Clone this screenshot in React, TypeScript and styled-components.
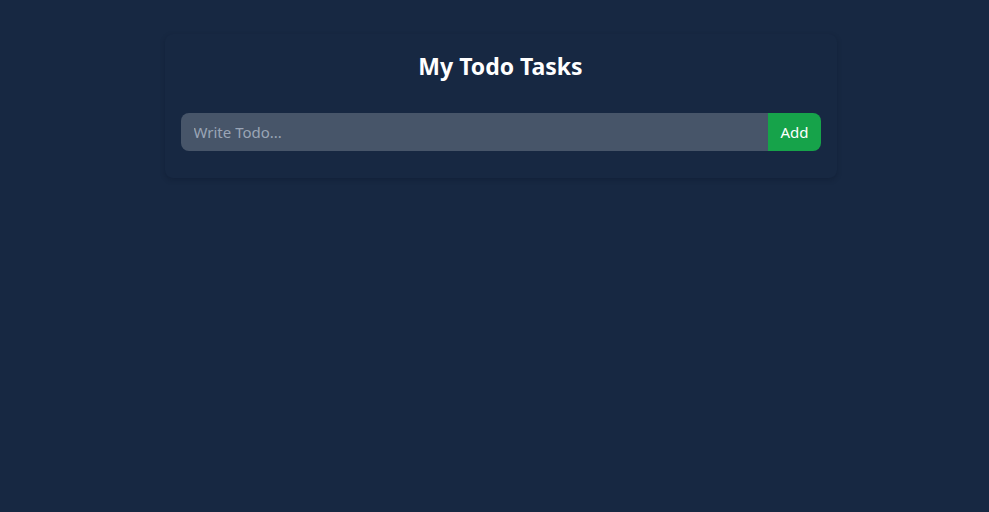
import { useState } from 'react';
import styled, { createGlobalStyle } from 'styled-components';

const GlobalStyle = createGlobalStyle`
  html, body {
    margin: 0;
    padding: 0;
    background: #172842;
    font-family: "Noto Sans", "Open Sans", sans-serif;
  }
`;

const Page = styled.div`
  min-height: 512px;
  display: flex;
  justify-content: center;
  align-items: flex-start;
  padding-left: 12px;
  box-sizing: border-box;
`;

const Card = styled.div`
  width: 672px;
  margin-top: 34px;
  padding: 16px 16px 27px;
  box-sizing: border-box;
  background: #172842;
  border-radius: 8px;
  box-shadow: 0 2px 5px rgba(8, 15, 30, 0.25);
`;

const Title = styled.h1`
  margin: 0 0 31px;
  text-align: center;
  color: #ffffff;
  font-size: 23px;
  font-weight: 700;
  line-height: 32px;
`;

const Form = styled.form`
  display: flex;
  height: 38px;
`;

const Input = styled.input`
  flex: 1;
  min-width: 0;
  border: none;
  outline: none;
  padding: 0 13px;
  background: #475569;
  color: #ffffff;
  font-family: inherit;
  font-size: 15px;
  border-radius: 8px 0 0 8px;

  &::placeholder {
    color: #9aa5b6;
  }
`;

const AddButton = styled.button`
  border: none;
  background: #16a34a;
  color: #ffffff;
  font-family: inherit;
  font-size: 15px;
  padding: 0 12px;
  border-radius: 0 8px 8px 0;
  cursor: pointer;
`;

const App = () => {
  const [todo, setTodo] = useState('');
  const [todos, setTodos] = useState<string[]>([]);

  return (
    <>
      <GlobalStyle />
      <Page>
        <Card>
          <Title>My Todo Tasks</Title>
          <Form
            onSubmit={(e) => {
              e.preventDefault();
              if (!todo.trim()) return;
              setTodos([...todos, todo]);
              setTodo('');
            }}
          >
            <Input
              placeholder="Write Todo..."
              value={todo}
              onChange={(e) => setTodo(e.target.value)}
            />
            <AddButton type="submit">Add</AddButton>
          </Form>
        </Card>
      </Page>
    </>
  );
};

export default App;
